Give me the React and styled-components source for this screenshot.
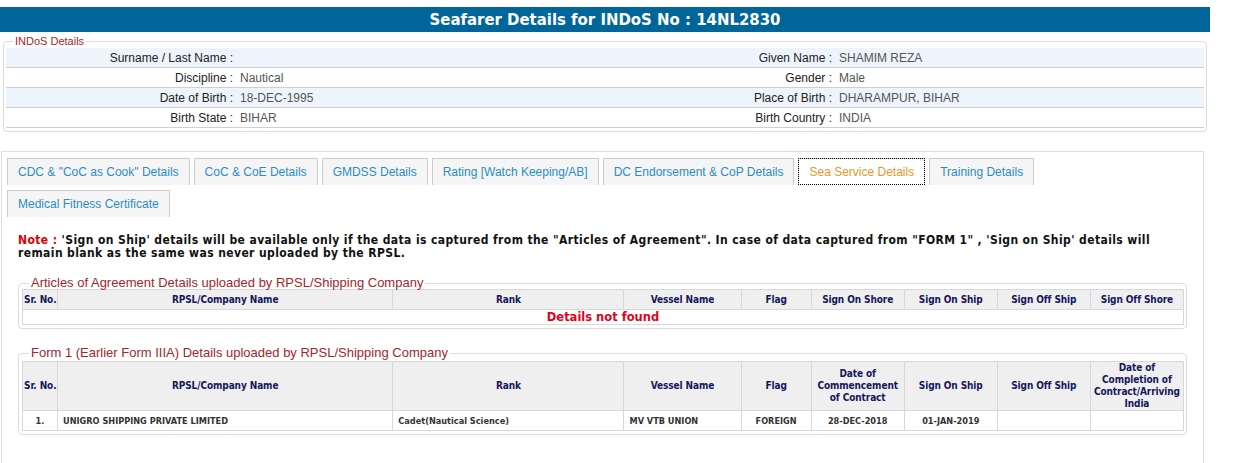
import React from "react";
import styled, { createGlobalStyle } from "styled-components";

const GlobalStyle = createGlobalStyle`
  body {
    margin: 0;
    background: #fff;
    font-family: "Liberation Sans", Arial, sans-serif;
  }
`;

const Page = styled.div`
  width: 1210px;
  padding-top: 7px;
`;

const TitleBar = styled.div`
  height: 25px;
  background: #00669a;
  color: #fff;
  text-align: center;
  font: bold 16.6px/25px "DejaVu Sans Condensed", "DejaVu Sans", sans-serif;
`;

const Fieldset = styled.fieldset`
  margin: ${(p) => p.$margin || "0"};
  padding: ${(p) => p.$pad || "0 2px 3px"};
  border: 1px solid #dcdcdc;
  border-radius: 4px;
  min-width: 0;
`;

const Legend = styled.legend`
  margin-left: 7px;
  padding: 0 2px;
  color: #a3262a;
  font-size: ${(p) => p.$size || 11}px;
  line-height: ${(p) => p.$lh || 13}px;
`;

const InfoTable = styled.table`
  width: 100%;
  border-collapse: collapse;
  table-layout: fixed;
`;

const InfoRow = styled.tr`
  background: ${(p) => (p.$alt ? "#eef4fb" : "#fff")};
  border-bottom: 1px solid #cfcfcf;
`;

const Label = styled.td`
  height: 19px;
  padding: 0 3px 0 0;
  text-align: right;
  font-size: 12px;
  color: #222;
`;

const Value = styled.td`
  padding: 0 0 0 4px;
  font-size: 12px;
  color: #555;
`;

const Panel = styled.div`
  margin: 19px 0 0 1px;
  width: 1203px;
  box-sizing: border-box;
  border: 1px solid #dddddd;
  padding: 6px 16px 40px 5px;
`;

const TabList = styled.div`
  display: flex;
  flex-wrap: wrap;
  gap: 5px 4px;
`;

const Tab = styled.div`
  padding: 6px 10px;
  font-size: 12px;
  line-height: 14px;
  color: ${(p) => (p.$active ? "#e8982a" : "#2b8dc4")};
  background: ${(p) => (p.$active ? "#fff" : "#f5f5f5")};
  border: 1px solid ${(p) => (p.$active ? "#f0cf86" : "#cccccc")};
  border-bottom: none;
  outline: ${(p) => (p.$active ? "1px dotted #000" : "none")};
  outline-offset: -1px;
  cursor: pointer;
`;

const Content = styled.div`
  padding-left: 11px;
`;

const Note = styled.p`
  margin: 17px 0 17px;
  font: bold 12px/13px "DejaVu Sans Condensed", "DejaVu Sans", sans-serif;
  letter-spacing: 0.4px;
  color: #111;
  span {
    color: #e00000;
  }
`;

const DataTable = styled.table`
  width: 100%;
  border-collapse: collapse;
  table-layout: fixed;
  border: 1px solid #d8d8d8;
`;

const Th = styled.th`
  height: ${(p) => p.$h || 18}px;
  padding: 0 1px;
  background: #efefef;
  border: 1px solid #d8d8d8;
  color: #16165c;
  font: bold 10px/12px "DejaVu Sans Condensed", "DejaVu Sans", sans-serif;
  letter-spacing: -0.1px;
  text-align: center;
  white-space: nowrap;
`;

const Td = styled.td`
  height: 19px;
  padding: 0 5px;
  border: 1px solid #d8d8d8;
  color: #333;
  font: bold 8.2px "DejaVu Sans", Verdana, sans-serif;
  text-align: ${(p) => p.$align || "left"};
  white-space: nowrap;
`;

const NotFound = styled.td`
  height: 14px;
  padding: 0;
  border: 1px solid #d8d8d8;
  color: #e3001b;
  font: bold 11.5px/14px "DejaVu Sans", Verdana, sans-serif;
  text-align: center;
`;

const Gap = styled.div`
  height: ${(p) => p.$h}px;
`;

const widths = [35, 335, 231, 117, 70, 93, 93, 93, 93];

const Cols = () => (
  <colgroup>
    {widths.map((w, i) => (
      <col key={i} style={{ width: w }} />
    ))}
  </colgroup>
);

const info = [
  ["Surname / Last Name :", "", "Given Name :", "SHAMIM REZA"],
  ["Discipline :", "Nautical", "Gender :", "Male"],
  ["Date of Birth :", "18-DEC-1995", "Place of Birth :", "DHARAMPUR, BIHAR"],
  ["Birth State :", "BIHAR", "Birth Country :", "INDIA"],
];

const tabs = [
  'CDC & "CoC as Cook" Details',
  "CoC & CoE Details",
  "GMDSS Details",
  "Rating [Watch Keeping/AB]",
  "DC Endorsement & CoP Details",
  "Sea Service Details",
  "Training Details",
  "Medical Fitness Certificate",
];

const articleHeads = [
  "Sr. No.",
  "RPSL/Company Name",
  "Rank",
  "Vessel Name",
  "Flag",
  "Sign On Shore",
  "Sign On Ship",
  "Sign Off Ship",
  "Sign Off Shore",
];

const formHeads = [
  ["Sr. No."],
  ["RPSL/Company Name"],
  ["Rank"],
  ["Vessel Name"],
  ["Flag"],
  ["Date of", "Commencement", "of Contract"],
  ["Sign On Ship"],
  ["Sign Off Ship"],
  ["Date of", "Completion of", "Contract/Arriving", "India"],
];

const formRows = [
  ["1.", "UNIGRO SHIPPING PRIVATE LIMITED", "Cadet(Nautical Science)", "MV VTB UNION", "FOREIGN", "28-DEC-2018", "01-JAN-2019", "", ""],
];
const formAlign = ["center", "left", "left", "left", "center", "center", "center", "center", "center"];

export default function App() {
  return (
    <>
      <GlobalStyle />
      <Page>
        <TitleBar>Seafarer Details for INDoS No : 14NL2830</TitleBar>

        <Fieldset $margin="3px 3px 0">
          <Legend>INDoS Details</Legend>
          <InfoTable>
            <colgroup>
              <col style={{ width: "19.2%" }} />
              <col style={{ width: "30.8%" }} />
              <col style={{ width: "19.2%" }} />
              <col style={{ width: "30.8%" }} />
            </colgroup>
            <tbody>
              {info.map((r, i) => (
                <InfoRow key={i} $alt={i % 2 === 0}>
                  <Label>{r[0]}</Label>
                  <Value>{r[1]}</Value>
                  <Label>{r[2]}</Label>
                  <Value>{r[3]}</Value>
                </InfoRow>
              ))}
            </tbody>
          </InfoTable>
        </Fieldset>

        <Panel>
          <TabList>
            {tabs.map((t, i) => (
              <Tab key={t} $active={i === 5}>
                {t}
              </Tab>
            ))}
          </TabList>

          <Content>
            <Note>
              <span>Note :</span> 'Sign on Ship' details will be available only if the data is captured from the
              "Articles of Agreement". In case of data captured from "FORM 1" , 'Sign on Ship' details will
              <br />
              remain blank as the same was never uploaded by the RPSL.
            </Note>

            <Fieldset $pad="0 2px 3px 3px">
              <Legend $size={13} $lh={12}>Articles of Agreement Details uploaded by RPSL/Shipping Company</Legend>
              <DataTable>
                <Cols />
                <thead>
                  <tr>
                    {articleHeads.map((h) => (
                      <Th key={h} $h={19}>{h}</Th>
                    ))}
                  </tr>
                </thead>
                <tbody>
                  <tr>
                    <NotFound colSpan={9}>Details not found</NotFound>
                  </tr>
                </tbody>
              </DataTable>
            </Fieldset>

            <Gap $h={18} />

            <Fieldset $pad="2px 2px 3px 3px">
              <Legend $size={13} $lh={12}>Form 1 (Earlier Form IIIA) Details uploaded by RPSL/Shipping Company</Legend>
              <DataTable>
                <Cols />
                <thead>
                  <tr>
                    {formHeads.map((h, i) => (
                      <Th key={i} $h={45}>
                        {h.map((line, j) => (
                          <React.Fragment key={j}>
                            {j > 0 && <br />}
                            {line}
                          </React.Fragment>
                        ))}
                      </Th>
                    ))}
                  </tr>
                </thead>
                <tbody>
                  {formRows.map((r, i) => (
                    <tr key={i}>
                      {r.map((c, j) => (
                        <Td key={j} $align={formAlign[j]}>
                          {c}
                        </Td>
                      ))}
                    </tr>
                  ))}
                </tbody>
              </DataTable>
            </Fieldset>
          </Content>
        </Panel>
      </Page>
    </>
  );
}
